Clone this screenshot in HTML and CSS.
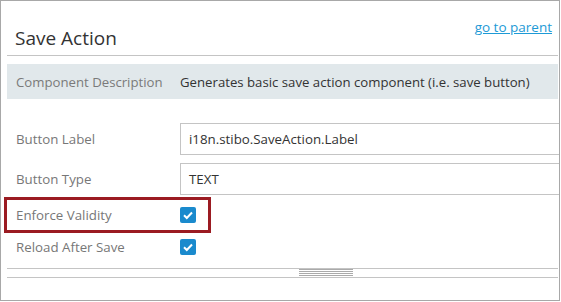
FILE: index.html
```html
<!DOCTYPE html>
<html lang="en">

<head>
    <meta http-equiv="Content-Type" content="text/html; charset=UTF-8">
    <meta name="viewport" content="width=device-width, initial-scale=1.0">
    <title>Save Action</title>
    <link rel="stylesheet" href="styles.css">
</head>

<body>
    <div class="frame">
        <div class="panel">
            <div class="header">
                <h1 class="title">Save Action</h1>
                <a class="parent-link" href="#">go to parent</a>
            </div>

            <div class="desc">
                <span class="desc-label">Component Description</span>
                <span class="desc-text">Generates basic save action component (i.e. save button)</span>
            </div>

            <div class="form">
                <div class="row">
                    <label class="row-label">Button Label</label>
                    <div class="field">i18n.stibo.SaveAction.Label</div>
                </div>
                <div class="row row-gap">
                    <label class="row-label">Button Type</label>
                    <div class="field">TEXT</div>
                </div>
                <div class="row row-check highlight">
                    <label class="row-label">Enforce Validity</label>
                    <span class="check">
                        <svg width="16" height="16" viewBox="0 0 16 16">
                            <polyline points="4,8.2 6.8,11 12,5.5" fill="none" stroke="#fff" stroke-width="2" />
                        </svg>
                    </span>
                </div>
                <div class="row row-check row-last">
                    <label class="row-label">Reload After Save</label>
                    <span class="check">
                        <svg width="16" height="16" viewBox="0 0 16 16">
                            <polyline points="4,8.2 6.8,11 12,5.5" fill="none" stroke="#fff" stroke-width="2" />
                        </svg>
                    </span>
                </div>
            </div>

            <div class="splitter"><span class="grip"></span></div>
        </div>
    </div>
</body>

</html>
```

FILE: styles.css
```css
body {
    margin: 0;
    font-family: "Open Sans", "Noto Sans", sans-serif;
    background: #ffffff;
}

.frame {
    width: 560px;
    height: 301px;
    box-sizing: border-box;
    border: 1px solid #a8a8a8;
}

.panel {
    height: 100%;
    padding: 0 1px 0 6px;
    overflow: hidden;
}

.header {
    display: flex;
    justify-content: space-between;
    align-items: flex-start;
    height: 54px;
    border-bottom: 1px solid #c4c4c4;
}

.title {
    margin: 25px 0 0 8px;
    font-size: 19px;
    line-height: 24px;
    font-weight: normal;
    color: #333333;
}

.parent-link {
    margin: 18px 6px 0 0;
    font-size: 13.5px;
    line-height: 17px;
    color: #1d9ad6;
    text-decoration: underline;
}

.desc {
    display: grid;
    grid-template-columns: 173px 1fr;
    align-items: center;
    height: 35px;
    margin-top: 8px;
    background: #e1e8eb;
    font-size: 13.2px;
}

.desc-label {
    padding-left: 9px;
    color: #7a7a7a;
}

.desc-text {
    color: #333333;
}

.form {
    padding-top: 24px;
}

.row {
    display: grid;
    grid-template-columns: 173px 1fr;
    align-items: center;
    font-size: 13.3px;
}

.row-gap {
    margin-top: 8px;
}

.row-label {
    padding-left: 9px;
    color: #777777;
}

.field {
    display: flex;
    align-items: center;
    width: calc(100% + 10px);
    height: 32px;
    box-sizing: border-box;
    padding-left: 8px;
    border: 1px solid #c4c4c4;
    color: #333333;
}

.row-check {
    grid-template-columns: 173px 16px;
    height: 30px;
}

.highlight {
    width: 201px;
    margin-top: 5px;
    outline: 3px solid #9b1b22;
}

.row-last {
    margin-top: 2px;
}

.check {
    display: block;
    width: 16px;
    height: 16px;
    border-radius: 2px;
    background: #1a8acd;
}

.check svg {
    display: block;
}

.splitter {
    height: 8px;
    margin-top: 6px;
    border-top: 1px solid #c4c4c4;
    border-bottom: 1px solid #c4c4c4;
}

.grip {
    display: block;
    width: 54px;
    height: 7px;
    margin-left: 292px;
    background: repeating-linear-gradient(to bottom, #aaaaaa 0 1px, transparent 1px 2px);
}
```
